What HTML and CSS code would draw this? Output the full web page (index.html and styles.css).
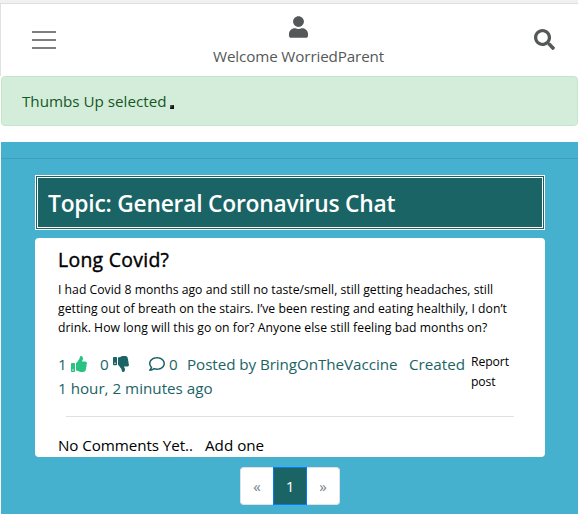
FILE: index.html
```html
<!DOCTYPE html>
<html lang="en">
<head>
<meta charset="utf-8">
<title>General Coronavirus Chat</title>
<link rel="stylesheet" href="styles.css">
</head>
<body>
<header class="navbar">
  <div class="menu"><i></i><i></i><i></i></div>
  <div class="account">
    <svg class="icon-user" viewBox="0 0 448 512"><path d="M224 256c70.7 0 128-57.3 128-128S294.7 0 224 0 96 57.3 96 128s57.3 128 128 128zm89.6 32h-16.7c-22.2 10.2-46.9 16-72.9 16s-50.6-5.8-72.9-16h-16.7C60.2 288 0 348.2 0 422.4V464c0 26.5 21.5 48 48 48h352c26.5 0 48-21.5 48-48v-41.6c0-74.2-60.2-134.4-134.4-134.4z"/></svg>
    <span class="welcome">Welcome WorriedParent</span>
  </div>
  <svg class="icon-search" viewBox="0 0 512 512"><path d="M505 442.7L405.3 343c-4.5-4.5-10.6-7-17-7H372c27.6-35.3 44-79.7 44-128C416 93.1 322.9 0 208 0S0 93.1 0 208s93.1 208 208 208c48.3 0 92.7-16.4 128-44v16.3c0 6.4 2.5 12.5 7 17l99.7 99.7c9.4 9.4 24.6 9.4 33.9 0l28.3-28.3c9.4-9.4 9.4-24.6.1-34zM208 336c-70.7 0-128-57.2-128-128 0-70.7 57.2-128 128-128 70.7 0 128 57.2 128 128 0 70.7-57.2 128-128 128z"/></svg>
</header>
<div class="alert"><span class="alert-text">Thumbs Up selected</span><span class="dot"></span></div>
<main class="page">
  <h1 class="topic"><span>Topic: General Coronavirus Chat</span></h1>
  <article class="card">
    <h2 class="title"><span>Long Covid?</span></h2>
    <p class="body"><span class="l1">I had Covid 8 months ago and still no taste/smell, still getting headaches, still</span><br><span class="l2">getting out of breath on the stairs. I’ve been resting and eating healthily, I don’t</span><br><span class="l3">drink. How long will this go on for? Anyone else still feeling bad months on?</span></p>
    <div class="meta">
      <div class="stats">
        <div class="row">
          <span class="up-count">1</span>
          <svg class="thumb up" viewBox="0 0 512 512"><path d="M104 224H24c-13.255 0-24 10.745-24 24v240c0 13.255 10.745 24 24 24h80c13.255 0 24-10.745 24-24V248c0-13.255-10.745-24-24-24zM64 472c-13.255 0-24-10.745-24-24s10.745-24 24-24 24 10.745 24 24-10.745 24-24 24zM384 81.452c0 42.416-25.97 66.208-33.277 94.548h101.723c33.397 0 59.397 27.746 59.553 58.098.084 17.938-7.546 37.249-19.439 49.197l-.11.11c9.836 23.337 8.237 56.037-9.308 79.469 8.681 25.895-.069 57.704-16.382 74.757 4.298 17.598 2.244 32.575-6.148 44.632C440.202 511.587 389.616 512 346.839 512l-2.845-.001c-48.287-.017-87.806-17.598-119.56-31.725-15.957-7.099-36.821-15.887-52.651-16.178-6.54-.12-11.783-5.457-11.783-11.998v-213.77c0-3.2 1.282-6.271 3.558-8.521 39.614-39.144 56.648-80.587 89.117-113.111 14.804-14.832 20.188-37.236 25.393-58.902C282.515 39.293 291.817 0 312 0c24 0 72 8 72 81.452z"/></svg>
          <span class="down-count">0</span>
          <svg class="thumb down" viewBox="0 0 512 512"><path transform="matrix(1 0 0 -1 0 512)" d="M104 216H24c-13.255 0-24 10.745-24 24v216c0 13.255 10.745 24 24 24h80c13.255 0 24-10.745 24-24V240c0-13.255-10.745-24-24-24zM64 304c-13.255 0-24-10.745-24-24s10.745-24 24-24 24 10.745 24 24-10.745 24-24 24zM384 81.452c0 42.416-25.97 66.208-33.277 94.548h101.723c33.397 0 59.397 27.746 59.553 58.098.084 17.938-7.546 37.249-19.439 49.197l-.11.11c9.836 23.337 8.237 56.037-9.308 79.469 8.681 25.895-.069 57.704-16.382 74.757 4.298 17.598 2.244 32.575-6.148 44.632C440.202 511.587 389.616 512 346.839 512l-2.845-.001c-48.287-.017-87.806-17.598-119.56-31.725-15.957-7.099-36.821-15.887-52.651-16.178-6.54-.12-11.783-5.457-11.783-11.998v-213.77c0-3.2 1.282-6.271 3.558-8.521 39.614-39.144 56.648-80.587 89.117-113.111 14.804-14.832 20.188-37.236 25.393-58.902C282.515 39.293 291.817 0 312 0c24 0 72 8 72 81.452z"/></svg>
          <svg class="comment" viewBox="0 0 512 512"><path d="M256 32C114.6 32 0 125.1 0 240c0 47.6 19.9 91.2 52.9 126.3C38 405.7 7 439.1 6.5 439.5c-6.6 7-8.4 17.2-4.6 26S14.4 480 24 480c61.5 0 110-25.7 139.1-46.3C192 442.8 223.2 448 256 448c141.4 0 256-93.1 256-208S397.4 32 256 32zm0 368c-26.7 0-53.1-4.1-78.4-12.1l-22.7-7.2-19.5 13.8c-14.3 10.1-33.9 21.4-57.5 29 7.3-12.1 14.4-25.7 19.9-40.2l10.6-28.1-20.6-21.8C69.7 314.1 48 282.2 48 240c0-88.2 93.3-160 208-160s208 71.8 208 160-93.3 160-208 160z"/></svg>
          <span class="comment-count">0</span>
          <span class="author">Posted by BringOnTheVaccine</span>
          <span class="created">Created</span>
        </div>
        <div class="row"><span class="age">1 hour, 2 minutes ago</span></div>
      </div>
      <div class="report"><span>Report</span><br><span>post</span></div>
    </div>
    <hr class="rule">
    <div class="comments"><span class="none">No Comments Yet..</span><span class="add">Add one</span></div>
  </article>
  <nav class="pagination"><span class="pg first">«</span><span class="pg active">1</span><span class="pg last">»</span></nav>
</main>
</body>
</html>
```
FILE: styles.css
```css
* { box-sizing: border-box; }
html { background: #fff; }
body {
  margin: 0;
  height: 514px;
  overflow: hidden;
  border-top: 3px solid #f1f1f1;
  font: 15.2px/24px "Open Sans", "Noto Sans", sans-serif;
  white-space: nowrap;
  color: #000;
}
svg { display: block; flex: none; fill: currentColor; }
.navbar {
  display: flex;
  height: 73px;
  border-top: 1px solid #dcdfe0;
  border-left: 1px solid #dee2e6;
  padding-left: 31px;
  color: #555859;
}
.menu {
  display: flex;
  flex-direction: column;
  gap: 6px;
  width: 24px;
  margin-top: 27px;
}
.menu i { height: 2px; background: #7f7f7f; }
.account { width: 172px; margin-left: 157px; }
.icon-user { width: 19px; height: 22px; margin: 12px 0 0 76px; }
.welcome { display: block; margin-top: 6px; letter-spacing: -.12px; }
.icon-search { width: 21px; height: 21px; margin: 25px 0 0 149px; }
.alert {
  display: flex;
  height: 50px;
  margin-left: 1px;
  padding: 12px 20px;
  border: 1px solid #c3e6cb;
  border-radius: 4px;
  background: #d4edda;
  color: #155724;
}
.alert-text { width: 144px; }
.dot { width: 4px; height: 4px; margin: 16px 0 0 4px; background: linear-gradient(135deg, #777, #111 60%); }
.page {
  height: 372px;
  margin: 16px 0 0 1px;
  padding: 16px 33px 0 34px;
  background: #45b1ce;
  background-image: linear-gradient(#3e9fb9, #3e9fb9);
  background-size: 100% 1px;
  background-position: 0 16px;
  background-repeat: no-repeat;
}
.topic {
  height: 55px;
  margin: 17px 0 8px;
  padding: 11px 10px 9px;
  border: 3px double #fff;
  background: #1a6466;
  color: #fff;
  font-size: 22.8px;
  font-weight: 600;
  line-height: 30px;
  letter-spacing: -.23px;
}
.card { height: 219px; padding: 9px 23px 0; border-radius: 4px; background: #fff; }
.title { margin: 0; font-size: 19.4px; font-weight: 500; line-height: 25px; letter-spacing: .3px; -webkit-text-stroke: .4px #000; }
.body { margin: 8px 0 0; font-size: 12.2px; line-height: 19px; }
.l1 { letter-spacing: .02px; }
.l2 { letter-spacing: .035px; }
.l3 { letter-spacing: .05px; }
.meta { display: flex; margin-top: 15px; }
.stats { width: 413px; color: #1a6466; }
.row { display: flex; height: 24px; }
.up-count { width: 13px; }
.thumb { width: 16px; height: 16px; margin-top: 4px; }
.up { color: #28c383; }
.down-count { width: 13px; margin-left: 13px; }
.comment { width: 16px; height: 16px; margin: 4px 4px 0 20px; }
.comment-count { width: 18px; }
.author { width: 222px; letter-spacing: -.06px; }
.report { font-size: 12.2px; line-height: 20px; letter-spacing: -.1px; }
.rule { height: 1px; margin: 16px 8px 16px; border: 0; background: #e0e0e0; }
.comments { display: flex; }
.none { width: 147px; letter-spacing: -.08px; }
.pagination { display: flex; width: 100px; height: 38px; margin: 10px 0 0 205px; line-height: 36px; text-align: center; color: #7b8289; }
.pg { border: 1px solid #dee2e6; background: #fff; }
.first { width: 33px; border-radius: 4px 0 0 4px; border-right: 0; }
.active { width: 34px; border-color: #007bff; background: #1a6466; color: #fff; }
.last { width: 33px; border-radius: 0 4px 4px 0; border-left: 0; }
```
